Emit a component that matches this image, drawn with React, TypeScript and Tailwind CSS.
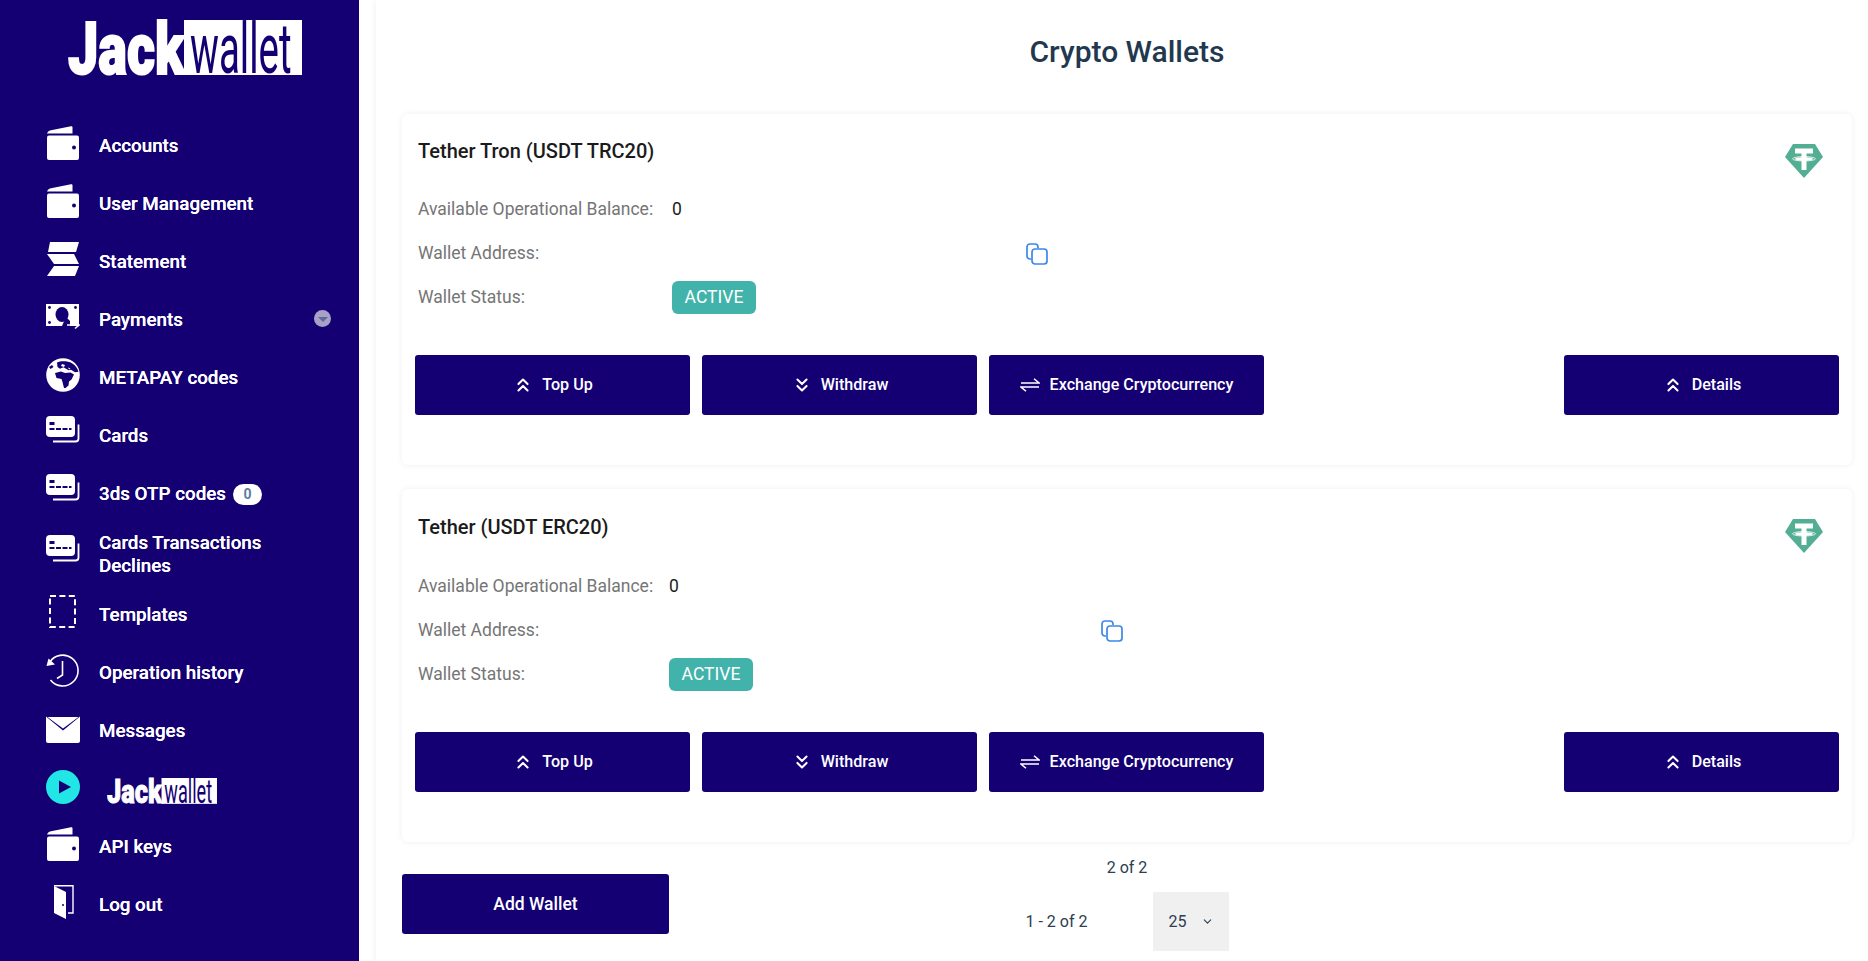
import React from 'react';
import { ChevronsUp, ChevronsDown, ChevronDown } from 'lucide-react';

const NAVY = '#140073';

function Logo() {
  return (
    <div className="flex h-[55px] w-[234px] shrink-0 select-none">
      <div className="relative h-[55px] w-[116px]">
        <span className="absolute left-0 top-[-15px] origin-left scale-x-[0.75] text-[72px] font-black leading-[90px] text-white [-webkit-text-stroke:2px_#fff]">Jack</span>
      </div>
      <div className="relative h-[55px] w-[118px] bg-white">
        <span className="absolute left-[6px] top-[-16px] origin-left scale-x-[0.55] text-[70px] font-normal leading-[90px] text-[#140073]">wallet</span>
      </div>
    </div>
  );
}

function WalletIcon() {
  return (
    <svg viewBox="0 0 34 34" className="h-[34px] w-[34px]">
      <path d="M1 8.5C1 6 2.5 4.8 5 4.2L25 .3C26 .1 26.5.6 26.5 1.6V7.5H1z" fill="#fff" />
      <rect x="1" y="9.5" width="32" height="24.5" rx="2" fill="#fff" />
      <circle cx="28" cy="21.5" r="2" fill={NAVY} />
    </svg>
  );
}

function StatementIcon() {
  return (
    <svg viewBox="0 0 34 34" className="h-[34px] w-[34px]" fill="#fff">
      <polygon points="4,0 33,0 30,10 2,10" />
      <polygon points="1,12 28,12 33,22 8,22" />
      <polygon points="8,24 33,24 29,34 1,34" />
    </svg>
  );
}

function MoneyIcon() {
  return (
    <svg viewBox="0 0 34 34" className="h-[34px] w-[34px]">
      <rect x="0" y="4" width="33" height="22" fill="#fff" />
      <ellipse cx="16" cy="14.5" rx="6.5" ry="7.5" fill={NAVY} />
      <path d="M20 17l4 4v5h-8z" fill={NAVY} />
      <circle cx="3.5" cy="7.5" r="1.4" fill={NAVY} />
      <circle cx="29.5" cy="7.5" r="1.4" fill={NAVY} />
      <circle cx="3.5" cy="22.5" r="1.4" fill={NAVY} />
      <path d="M21 25h11.5M29 21.5l4 3.5-4 3.5" stroke="#fff" strokeWidth="1.6" fill="none" />
    </svg>
  );
}

function GlobeIcon() {
  return (
    <svg viewBox="0 0 34 34" className="h-[34px] w-[34px]">
      <circle cx="17" cy="17" r="16.8" fill="#fff" />
      <path d="M11 4.5c4-1.8 11-1.5 15 .8 3.5 2 5.8 5.5 6.5 8.5l-3.5.5-4-2.5-2.5.5-5-3-3.5 1.5L11.5 9z" fill={NAVY} />
      <path d="M9 15l6-1.5 4 1.5 5.5-.5 3.5 2-2.5 5-2.5 2-.5 4-3 2.5h-1.5l-1.5-6-1-3-5-1z" fill={NAVY} />
      <path d="M3 9l3-2 1.5 2-3 2z" fill={NAVY} />
      <path d="M16 6l3 1-1 2-3-1zM22 9.5l2.5 1-1.5 1z" fill="#fff" />
    </svg>
  );
}

function CardsIcon() {
  return (
    <svg viewBox="0 0 34 34" className="h-[34px] w-[34px]">
      <path d="M32.5 8.5V22.5a3 3 0 0 1-3 3H7" stroke="#fff" strokeWidth="1.8" fill="none" />
      <rect x="0" y="0" width="29" height="21" rx="4" fill="#fff" />
      <rect x="3.5" y="6" width="5" height="3" fill={NAVY} />
      <path d="M3.5 13h22" stroke={NAVY} strokeWidth="2" strokeDasharray="5 1.5" />
    </svg>
  );
}

function TemplatesIcon() {
  return (
    <svg viewBox="0 0 34 34" className="h-[34px] w-[34px]">
      <rect x="4" y="1" width="25" height="31" fill="none" stroke="#fff" strokeWidth="2" strokeDasharray="6 3.4" />
    </svg>
  );
}

function HistoryIcon() {
  return (
    <svg viewBox="0 0 34 34" className="h-[34px] w-[34px]" fill="none" stroke="#fff" strokeWidth="1.6">
      <path d="M3.5 9.5A15.4 15.4 0 1 1 4.5 27" />
      <path d="M.5 13l2-7.500 6.500 6z" fill="#fff" stroke="none" />
      <path d="M16.500 8v14l-5.500 3.500" />
    </svg>
  );
}

function MailIcon() {
  return (
    <svg viewBox="0 0 34 34" className="h-[34px] w-[34px]">
      <path d="M0 5.500V30a2 2 0 0 0 2 2h30a2 2 0 0 0 2-2V5.500L17 19.500z" fill="#fff" />
      <path d="M1.500 6h31L17 17.500z" fill="#fff" />
    </svg>
  );
}

function PlayIcon() {
  return (
    <svg viewBox="0 0 34 34" className="h-[34px] w-[34px]">
      <circle cx="17" cy="17" r="17" fill="#22e6e6" />
      <polygon points="13,10.500 25,17 13,23.500" fill={NAVY} />
    </svg>
  );
}

function DoorIcon() {
  return (
    <svg viewBox="0 0 34 34" className="h-[34px] w-[34px]">
      <path d="M8 1v27l12 6V7z" fill="#fff" />
      <path d="M8 .7h19v27.300h-5" fill="none" stroke="#fff" strokeWidth="1.400" />
      <circle cx="17" cy="20" r="1" fill={NAVY} />
    </svg>
  );
}

function TetherIcon() {
  return (
    <svg viewBox="0 0 38 34" className="h-[34px] w-[38px]">
      <polygon points="8,0 30,0 38,13 19,34 0,13" fill="#53ae94" />
      <path d="M10 4.500h18v5h-6.500v3.800c3.800.2 6.500.8 6.500 1.700s-2.700 1.500-6.500 1.700V26h-5V16.700c-3.800-.2-6.500-.8-6.500-1.700s2.700-1.500 6.500-1.700V9.500H10z" fill="#fff" />
      <ellipse cx="19" cy="14.800" rx="11.500" ry="2.200" fill="none" stroke="#fff" strokeWidth=".8" />
    </svg>
  );
}

function CopyIcon() {
  return (
    <svg viewBox="0 0 22 22" className="h-[22px] w-[22px]" fill="none" stroke="#3b88e8" strokeWidth="1.700">
      <path d="M5 16H4a3 3 0 0 1-3-3V4a3 3 0 0 1 3-3h5a3 3 0 0 1 3 3v1" />
      <rect x="6" y="6" width="15" height="15" rx="3" />
    </svg>
  );
}

function ExchangeIcon() {
  return (
    <svg viewBox="0 0 20 14" className="mr-[2px] h-[14px] w-[20px]" fill="none" stroke="#fff" strokeWidth="1.500">
      <path d="M1 5h18L14 .8" />
      <path d="M19 9H1l5 4.200" />
    </svg>
  );
}

const navItems = [
  { label: 'Accounts', icon: <WalletIcon />, h: 'h-[58px]' },
  { label: 'User Management', icon: <WalletIcon />, h: 'h-[58px]' },
  { label: 'Statement', icon: <StatementIcon />, h: 'h-[58px]' },
  { label: 'Payments', icon: <MoneyIcon />, h: 'h-[58px]', caret: true },
  { label: 'METAPAY codes', icon: <GlobeIcon />, h: 'h-[58px]' },
  { label: 'Cards', icon: <CardsIcon />, h: 'h-[58px]' },
  { label: '3ds OTP codes', icon: <CardsIcon />, h: 'h-[58px]', badge: '0' },
  { label: 'Cards Transactions Declines', icon: <CardsIcon />, h: 'h-[63px]' },
  { label: 'Templates', icon: <TemplatesIcon />, h: 'h-[58px]' },
  { label: 'Operation history', icon: <HistoryIcon />, h: 'h-[58px]' },
  { label: 'Messages', icon: <MailIcon />, h: 'h-[58px]' },
  { label: 'logo', icon: <PlayIcon />, h: 'h-[58px]' },
  { label: 'API keys', icon: <WalletIcon />, h: 'h-[58px]' },
  { label: 'Log out', icon: <DoorIcon />, h: 'h-[58px]' },
];

function Sidebar() {
  return (
    <aside className="flex h-[961px] w-[359px] shrink-0 flex-col bg-[#140073]">
      <div className="flex h-[117px] justify-center pl-[11px] pt-[20px]">
        <Logo />
      </div>
      <nav className="flex flex-col pl-[46px] pr-[28px]">
        {navItems.map((item) => (
          <div key={item.label} className={`flex items-center ${item.h}`}>
            <div className={`h-[34px] w-[34px] shrink-0 ${item.label === 'logo' ? 'mb-[5px]' : 'mb-[6px]'}`}>{item.icon}</div>
            {item.label === 'logo' ? (
              <div className="ml-[27px] mt-[4px] h-[26px] w-[110px]">
                <div className="origin-top-left scale-[0.47]">
                  <Logo />
                </div>
              </div>
            ) : (
              <div className="ml-[19px] flex flex-1 items-center text-[18.8px] font-medium leading-[23px] text-white [text-shadow:0_0_.5px_#fff]">
                <span className="max-w-[175px]">{item.label}</span>
                {item.badge && (
                  <span className="ml-[7px] flex h-[21px] w-[29px] items-center justify-center rounded-full bg-white text-[14px] font-bold text-[#5b7f9f] [text-shadow:none]">
                    {item.badge}
                  </span>
                )}
                {item.caret && (
                  <span className="mb-[4px] ml-auto flex h-[17px] w-[17px] items-center justify-center rounded-full bg-[#a7a1c9]">
                    <span className="mt-[3px] border-x-[5px] border-t-[5px] border-x-transparent border-t-[#5e6a94]" />
                  </span>
                )}
              </div>
            )}
          </div>
        ))}
      </nav>
    </aside>
  );
}

function ActionButton({ icon, label }: { icon: React.ReactNode; label: string }) {
  return (
    <button className="flex h-[60px] w-[275px] items-center justify-center gap-[8px] rounded-[3px] bg-[#140073] text-[16.1px] font-medium text-white">
      {icon}
      {label}
    </button>
  );
}

function WalletCard({ name, gridCols, copyClass, titleClass, topClass, h }: { name: string; gridCols: string; copyClass: string; titleClass: string; topClass: string; h: string }) {
  return (
    <section className={`relative rounded-[6px] bg-white px-[13px] shadow-[0_0_6px_rgba(0,0,0,0.07)] ${h}`}>
      <h3 className={`pl-[3px] text-[20px] font-medium leading-[24px] text-[#1b1b1b] ${titleClass}`}>{name}</h3>
      <div className="absolute right-[29px] top-[30px]">
        <TetherIcon />
      </div>
      <div className={`grid items-center pl-[3px] text-[17.5px] leading-[24px] ${gridCols} ${topClass}`}>
        <div className="flex h-[44px] items-center text-[#757575]">Available Operational Balance:</div>
        <div className="flex h-[44px] items-center text-[#1b1b1b]">0</div>
        <div className="flex h-[44px] items-center text-[#757575]">Wallet Address:</div>
        <div className="flex h-[44px] items-center">
          <div className={`mt-[2px] ${copyClass}`}><CopyIcon /></div>
        </div>
        <div className="flex h-[44px] items-center text-[#757575]">Wallet Status:</div>
        <div className="flex h-[44px] items-center">
          <span className="flex h-[33px] w-[84px] items-center justify-center rounded-[6px] bg-[#41b3ab] text-white">ACTIVE</span>
        </div>
      </div>
      <div className="mt-[36px] flex gap-[12px]">
        <ActionButton icon={<ChevronsUp className="h-[22px] w-[22px]" strokeWidth={2.2} />} label="Top Up" />
        <ActionButton icon={<ChevronsDown className="h-[22px] w-[22px]" strokeWidth={2.2} />} label="Withdraw" />
        <ActionButton icon={<ExchangeIcon />} label="Exchange Cryptocurrency" />
        <div className="ml-auto">
          <ActionButton icon={<ChevronsUp className="h-[22px] w-[22px]" strokeWidth={2.2} />} label="Details" />
        </div>
      </div>
    </section>
  );
}

export default function App() {
  return (
    <div className="flex h-[961px] w-[1868px] overflow-hidden bg-white font-[Roboto,sans-serif]">
      <Sidebar />
      <main className="ml-[17px] flex-1 pl-[26px] pr-[16px] shadow-[-3px_0_4px_rgba(0,0,0,0.03)]">
        <h1 className="flex h-[114px] items-center justify-center pb-[12px] text-[30px] font-medium text-[#22384f]">Crypto Wallets</h1>
        <div className="flex flex-col gap-[24px]">
          <WalletCard name="Tether Tron (USDT TRC20)" gridCols="grid-cols-[254px_1fr]" copyClass="ml-[354px]" titleClass="pt-[25px]" topClass="mt-[24px]" h="h-[351px]" />
          <WalletCard name="Tether (USDT ERC20)" gridCols="grid-cols-[251px_1fr]" copyClass="ml-[432px]" titleClass="pt-[26px]" topClass="mt-[25px]" h="h-[353px]" />
        </div>
        <div className="mt-[16px] grid grid-cols-[267px_1fr_267px]">
          <button className="mt-[16px] h-[60px] rounded-[3px] bg-[#140073] text-[17.5px] font-medium text-white">Add Wallet</button>
          <div className="flex flex-col items-center text-[16px] text-[#2c3e50]">
            <div className="h-[20px] leading-[20px]">2 of 2</div>
            <div className="ml-[1px] mt-[14px] flex items-center gap-[66px]">
              <span>1 - 2 of 2</span>
              <div className="flex h-[59px] w-[76px] items-center bg-[#f0f0f0] pl-[15px]">
                <span>25</span>
                <ChevronDown className="ml-[15px] h-[13px] w-[13px]" strokeWidth={2} />
              </div>
            </div>
          </div>
        </div>
      </main>
    </div>
  );
}
